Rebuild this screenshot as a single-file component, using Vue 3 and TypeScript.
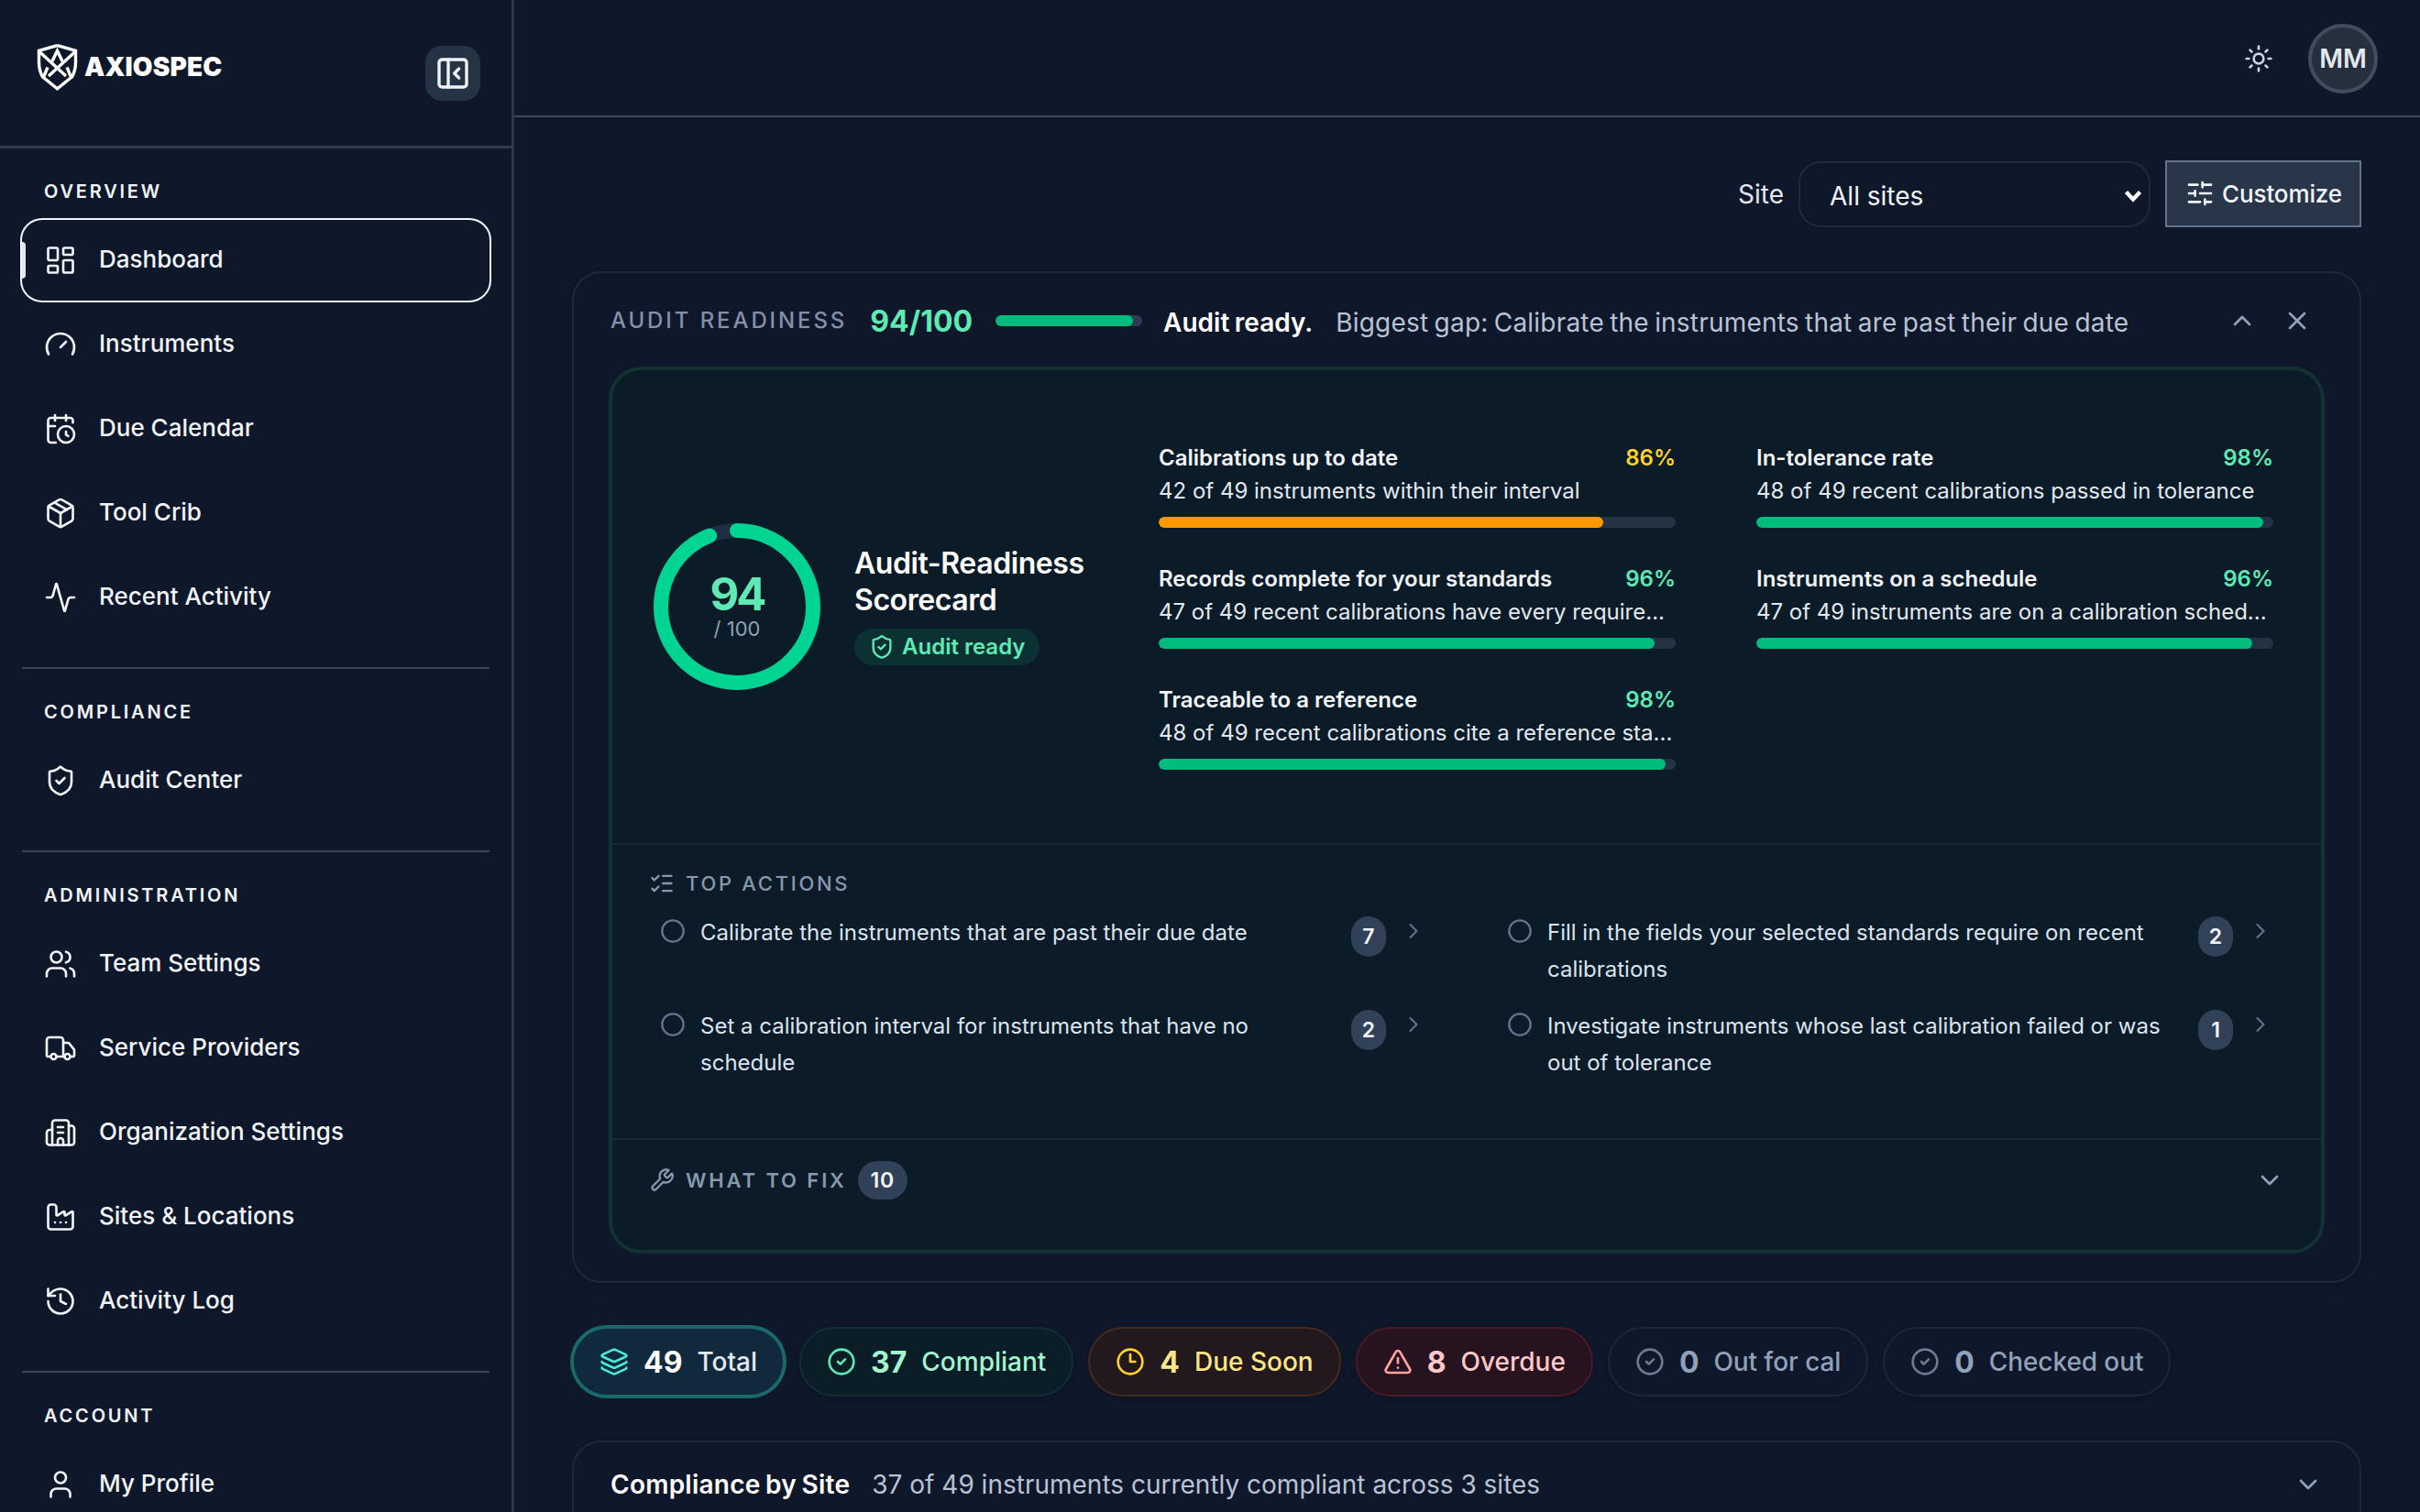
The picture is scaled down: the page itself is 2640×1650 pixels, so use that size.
<script setup lang="ts">
import { h } from 'vue'

const icons: Record<string, string> = {
  panel: '<rect width="18" height="18" x="3" y="3" rx="2"/><path d="M9 3v18"/><path d="m16 15-3-3 3-3"/>',
  dashboard: '<rect width="7" height="9" x="3" y="3" rx="1"/><rect width="7" height="5" x="14" y="3" rx="1"/><rect width="7" height="9" x="14" y="12" rx="1"/><rect width="7" height="5" x="3" y="16" rx="1"/>',
  gauge: '<path d="m12 14 4-4"/><path d="M3.34 19a10 10 0 1 1 17.32 0"/>',
  calendar: '<path d="M16 14v2.2l1.6 1"/><path d="M16 2v4"/><path d="M21 7.5V6a2 2 0 0 0-2-2H5a2 2 0 0 0-2 2v14a2 2 0 0 0 2 2h3.5"/><path d="M3 10h5"/><path d="M8 2v4"/><circle cx="16" cy="16" r="6"/>',
  box: '<path d="M11 21.73a2 2 0 0 0 2 0l7-4A2 2 0 0 0 21 16V8a2 2 0 0 0-1-1.73l-7-4a2 2 0 0 0-2 0l-7 4A2 2 0 0 0 3 8v8a2 2 0 0 0 1 1.73z"/><path d="M12 22V12"/><path d="M3.29 7 12 12l8.71-5"/><path d="m7.5 4.27 9 5.15"/>',
  activity: '<path d="M22 12h-2.48a2 2 0 0 0-1.93 1.46l-2.35 8.36a.25.25 0 0 1-.48 0L9.24 2.18a.25.25 0 0 0-.48 0l-2.35 8.36A2 2 0 0 1 4.49 12H2"/>',
  shield: '<path d="M20 13c0 5-3.5 7.5-7.66 8.95a1 1 0 0 1-.67-.01C7.5 20.5 4 18 4 13V6a1 1 0 0 1 1-1c2 0 4.5-1.2 6.24-2.72a1.17 1.17 0 0 1 1.52 0C14.51 3.81 17 5 19 5a1 1 0 0 1 1 1z"/><path d="m9 12 2 2 4-4"/>',
  users: '<path d="M16 21v-2a4 4 0 0 0-4-4H6a4 4 0 0 0-4 4v2"/><circle cx="9" cy="7" r="4"/><path d="M22 21v-2a4 4 0 0 0-3-3.87"/><path d="M16 3.13a4 4 0 0 1 0 7.75"/>',
  truck: '<path d="M14 18V6a2 2 0 0 0-2-2H4a2 2 0 0 0-2 2v11a1 1 0 0 0 1 1h2"/><path d="M15 18H9"/><path d="M19 18h2a1 1 0 0 0 1-1v-3.65a1 1 0 0 0-.22-.62l-3.48-4.35A1 1 0 0 0 17.52 8H14"/><circle cx="17" cy="18" r="2"/><circle cx="7" cy="18" r="2"/>',
  building: '<path d="M10 12h4"/><path d="M10 8h4"/><path d="M14 21v-3a2 2 0 0 0-4 0v3"/><path d="M6 10H4a2 2 0 0 0-2 2v7a2 2 0 0 0 2 2h16a2 2 0 0 0 2-2V9a2 2 0 0 0-2-2h-2"/><path d="M6 21V5a2 2 0 0 1 2-2h8a2 2 0 0 1 2 2v16"/>',
  factory: '<path d="M12 16h.01"/><path d="M16 16h.01"/><path d="M3 19a2 2 0 0 0 2 2h14a2 2 0 0 0 2-2V8.5a.5.5 0 0 0-.769-.422l-4.462 2.844A.5.5 0 0 1 15 10.5v-2a.5.5 0 0 0-.769-.422L9.77 10.922A.5.5 0 0 1 9 10.5V5a2 2 0 0 0-2-2H5a2 2 0 0 0-2 2z"/><path d="M8 16h.01"/>',
  history: '<path d="M3 12a9 9 0 1 0 9-9 9.75 9.75 0 0 0-6.74 2.74L3 8"/><path d="M3 3v5h5"/><path d="M12 7v5l4 2"/>',
  user: '<path d="M19 21v-2a4 4 0 0 0-4-4H9a4 4 0 0 0-4 4v2"/><circle cx="12" cy="7" r="4"/>',
  sun: '<circle cx="12" cy="12" r="4"/><path d="M12 2v2"/><path d="M12 20v2"/><path d="m4.93 4.93 1.41 1.41"/><path d="m17.66 17.66 1.41 1.41"/><path d="M2 12h2"/><path d="M20 12h2"/><path d="m6.34 17.66-1.41 1.41"/><path d="m19.07 4.93-1.41 1.41"/>',
  sliders: '<path d="M10 5H3"/><path d="M12 19H3"/><path d="M14 3v4"/><path d="M16 17v4"/><path d="M21 12h-9"/><path d="M21 19h-5"/><path d="M21 5h-7"/><path d="M8 10v4"/><path d="M8 12H3"/>',
  up: '<path d="m18 15-6-6-6 6"/>',
  down: '<path d="m6 9 6 6 6-6"/>',
  right: '<path d="m9 18 6-6-6-6"/>',
  x: '<path d="M18 6 6 18"/><path d="m6 6 12 12"/>',
  checks: '<path d="M13 5h8"/><path d="M13 12h8"/><path d="M13 19h8"/><path d="m3 17 2 2 4-4"/><path d="m3 7 2 2 4-4"/>',
  circle: '<circle cx="12" cy="12" r="10"/>',
  wrench: '<path d="M14.7 6.3a1 1 0 0 0 0 1.4l1.6 1.6a1 1 0 0 0 1.4 0l3.77-3.77a6 6 0 0 1-7.94 7.94l-6.91 6.91a2.12 2.12 0 0 1-3-3l6.91-6.91a6 6 0 0 1 7.94-7.94l-3.76 3.76z"/>',
  layers: '<path d="M12.83 2.18a2 2 0 0 0-1.66 0L2.6 6.08a1 1 0 0 0 0 1.83l8.58 3.91a2 2 0 0 0 1.66 0l8.58-3.9a1 1 0 0 0 0-1.83z"/><path d="M2 12a1 1 0 0 0 .58.91l8.6 3.91a2 2 0 0 0 1.65 0l8.58-3.9A1 1 0 0 0 22 12"/><path d="M2 17a1 1 0 0 0 .58.91l8.6 3.91a2 2 0 0 0 1.65 0l8.58-3.9A1 1 0 0 0 22 17"/>',
  check: '<circle cx="12" cy="12" r="10"/><path d="m9 12 2 2 4-4"/>',
  clock: '<circle cx="12" cy="12" r="10"/><path d="M12 6v6h4"/>',
  alert: '<path d="m21.73 18-8-14a2 2 0 0 0-3.48 0l-8 14A2 2 0 0 0 4 21h16a2 2 0 0 0 1.73-3"/><path d="M12 9v4"/><path d="M12 17h.01"/>',
}

const Icon = (props: { name: string }) =>
  h('svg', { class: 'icon', viewBox: '0 0 24 24', innerHTML: icons[props.name] })

const sections = [
  { title: 'Overview', items: [
    { icon: 'dashboard', label: 'Dashboard', active: true },
    { icon: 'gauge', label: 'Instruments' },
    { icon: 'calendar', label: 'Due Calendar' },
    { icon: 'box', label: 'Tool Crib' },
    { icon: 'activity', label: 'Recent Activity' },
  ] },
  { title: 'Compliance', items: [{ icon: 'shield', label: 'Audit Center' }] },
  { title: 'Administration', items: [
    { icon: 'users', label: 'Team Settings' },
    { icon: 'truck', label: 'Service Providers' },
    { icon: 'building', label: 'Organization Settings' },
    { icon: 'factory', label: 'Sites & Locations' },
    { icon: 'history', label: 'Activity Log' },
  ] },
  { title: 'Account', items: [{ icon: 'user', label: 'My Profile' }] },
] as { title: string; items: { icon: string; label: string; active?: boolean }[] }[]

const metrics = [
  { name: 'Calibrations up to date', pct: 86, note: '42 of 49 instruments within their interval' },
  { name: 'In-tolerance rate', pct: 98, note: '48 of 49 recent calibrations passed in tolerance' },
  { name: 'Records complete for your standards', pct: 96, note: '47 of 49 recent calibrations have every require...' },
  { name: 'Instruments on a schedule', pct: 96, note: '47 of 49 instruments are on a calibration sched...' },
  { name: 'Traceable to a reference', pct: 98, note: '48 of 49 recent calibrations cite a reference sta...' },
]

const actions = [
  { text: 'Calibrate the instruments that are past their due date', count: 7 },
  { text: 'Fill in the fields your selected standards require on recent calibrations', count: 2 },
  { text: 'Set a calibration interval for instruments that have no schedule', count: 2 },
  { text: 'Investigate instruments whose last calibration failed or was out of tolerance', count: 1 },
]

const pills = [
  { tone: 'total', icon: 'layers', count: 49, label: 'Total' },
  { tone: 'ok', icon: 'check', count: 37, label: 'Compliant' },
  { tone: 'due', icon: 'clock', count: 4, label: 'Due Soon' },
  { tone: 'over', icon: 'alert', count: 8, label: 'Overdue' },
  { tone: 'idle', icon: 'check', count: 0, label: 'Out for cal' },
  { tone: 'idle', icon: 'check', count: 0, label: 'Checked out' },
]

const circumference = 2 * Math.PI * 83
const ringDash = `${circumference * 0.94} ${circumference}`
</script>

<template>
  <div class="app">
    <aside class="sidebar">
      <div class="brand-row">
        <div class="brand">
          <svg class="logo" viewBox="0 0 44 51">
            <path d="M22 1.6 42 7.4V20c0 7-1.6 12-4.4 16.6M22 1.6 2 7.4V20c0 7 1.6 12 4.4 16.6" />
            <path d="M2.6 8.6 31.5 35M41.4 8.6 12.5 35" />
            <path d="M16.4 19 22 7.5 27.6 19" />
            <path d="M11.5 25.5 6.8 36.5 22 48.8 37.2 36.5 32.5 25.5" />
          </svg>
          <span class="brand-name">AXIOSPEC</span>
        </div>
        <button class="collapse"><Icon name="panel" /></button>
      </div>
      <nav>
        <section v-for="s in sections" :key="s.title" class="nav-section">
          <h6>{{ s.title }}</h6>
          <a v-for="i in s.items" :key="i.label" class="nav-item" :class="{ active: i.active }">
            <Icon :name="i.icon" /><span>{{ i.label }}</span>
          </a>
        </section>
      </nav>
    </aside>

    <div class="main">
      <header class="topbar">
        <Icon name="sun" class="sun" />
        <div class="avatar">MM</div>
      </header>

      <div class="content">
        <div class="toolbar">
          <span class="site">Site</span>
          <div class="select">
            <span>All sites</span>
            <svg viewBox="0 0 20 14"><path d="M2.5 2.5 10 10.5l7.5-8" /></svg>
          </div>
          <button class="customize"><Icon name="sliders" /><span>Customize</span></button>
        </div>

        <div class="card">
          <div class="card-head">
            <span class="eyebrow">Audit readiness</span>
            <span class="score">94/100</span>
            <span class="bar mini"><i :style="{ width: '94%' }"></i></span>
            <span class="ready">Audit ready.</span>
            <span class="gap-note">Biggest gap: Calibrate the instruments that are past their due date</span>
            <span class="head-icons"><Icon name="up" /><Icon name="x" /></span>
          </div>

          <div class="score-card">
            <div class="summary">
              <div class="ring">
                <svg viewBox="0 0 192 192">
                  <circle class="track" cx="96" cy="96" r="83" />
                  <circle class="value" cx="96" cy="96" r="83" :stroke-dasharray="ringDash" transform="rotate(-90 96 96)" />
                </svg>
                <div class="ring-text"><b>94</b><span>/ 100</span></div>
              </div>
              <div class="score-title">
                <h2>Audit-Readiness<br />Scorecard</h2>
                <span class="ready-badge"><Icon name="shield" /><span>Audit ready</span></span>
              </div>
              <div class="metrics">
                <div v-for="m in metrics" :key="m.name" class="metric">
                  <div class="metric-top"><span>{{ m.name }}</span><b :class="{ warn: m.pct < 90 }">{{ m.pct }}%</b></div>
                  <p>{{ m.note }}</p>
                  <span class="bar" :class="{ warn: m.pct < 90 }"><i :style="{ width: m.pct + '%' }"></i></span>
                </div>
              </div>
            </div>

            <div class="actions">
              <div class="sub-head"><Icon name="checks" /><span class="top-title">Top actions</span></div>
              <div class="action-grid">
                <div v-for="a in actions" :key="a.text" class="action">
                  <Icon name="circle" class="todo" />
                  <p>{{ a.text }}</p>
                  <span class="count">{{ a.count }}</span>
                  <Icon name="right" class="go" />
                </div>
              </div>
            </div>

            <div class="fix">
              <div class="sub-head"><Icon name="wrench" /><span class="fix-title">What to fix</span><span class="count">10</span></div>
              <Icon name="down" class="chev" />
            </div>
          </div>
        </div>

        <div class="pills">
          <div v-for="p in pills" :key="p.label" class="pill" :class="p.tone">
            <Icon :name="p.icon" /><b>{{ p.count }}</b><span>{{ p.label }}</span>
          </div>
        </div>

        <div class="card site-card">
          <b>Compliance by Site</b>
          <span>37 of 49 instruments currently compliant across 3 sites</span>
          <Icon name="down" class="chev" />
        </div>
      </div>
    </div>
  </div>
</template>

<style>
body { margin: 0; background: #0f172a; }
</style>

<style scoped>
* { box-sizing: border-box; }
.app { display: flex; width: 2640px; height: 1650px; overflow: hidden; background: #0f172a; color: #f1f5f9; font-family: Inter, "Liberation Sans", sans-serif; font-size: 24px; }
h2, h6, p { margin: 0; }
button { border: 0; font: inherit; color: inherit; padding: 0; }
.icon { width: 32px; height: 32px; flex: none; display: block; fill: none; stroke: currentColor; stroke-width: 2; stroke-linecap: round; stroke-linejoin: round; }

.sidebar { width: 561px; flex: none; border-right: 3px solid #2c374a; }
.brand-row { display: flex; justify-content: space-between; align-items: flex-start; height: 162px; padding: 48px 34px 0 40px; border-bottom: 3px solid #303b4e; }
.brand { display: flex; align-items: center; gap: 7px; }
.logo { width: 45px; height: 51px; fill: none; stroke: #fff; stroke-width: 3.4; }
.brand-name { font-size: 28px; font-weight: 900; letter-spacing: 0.15px; color: #fff; line-height: 32px; padding-bottom: 2px; }
.collapse { display: grid; place-items: center; width: 60px; height: 60px; margin-top: 2px; border-radius: 18px; background: #253347; }
.collapse .icon { width: 40px; height: 40px; }
.nav-section { width: 510px; margin: 0 0 32px 24px; padding-top: 32px; display: flex; flex-direction: column; gap: 4px; }
.nav-section + .nav-section { border-top: 2px solid #3a4558; }
h6 { font-size: 20px; line-height: 30px; font-weight: 600; letter-spacing: 2.8px; text-transform: uppercase; padding-left: 24px; margin-bottom: 12px; }
.nav-item { position: relative; display: flex; align-items: center; gap: 24px; height: 88px; padding-left: 24px; border-radius: 22px; font-size: 26px; font-weight: 500; }
.nav-item span { padding-bottom: 3px; }
.nav-item .icon { width: 36px; height: 36px; stroke-width: 1.75; }
.nav-item.active { box-shadow: 0 0 0 2px #f1f5f9; }
.nav-item.active::before { content: ""; position: absolute; left: 0; top: 24px; width: 4px; height: 40px; background: #e2e8f0; border-radius: 0 4px 4px 0; }

.main { flex: 1; min-width: 0; }
.topbar { display: flex; justify-content: flex-end; align-items: center; gap: 38px; height: 128px; padding: 2px 46px 0 0; border-bottom: 2px solid #3d485a; }
.sun { color: #cad5e2; }
.avatar { display: grid; place-items: center; width: 76px; height: 76px; border-radius: 50%; border: 4px solid #414c5c; background: #252f3e; font-size: 28px; font-weight: 600; color: #e2e8f0; }
.content { padding: 48px 64px 0 63px; }
.toolbar { display: flex; align-items: center; justify-content: flex-end; height: 72px; }
.site { font-size: 28px; color: #e2e8f0; margin-right: 16px; }
.select { display: flex; align-items: center; justify-content: space-between; width: 384px; height: 72px; border: 2px solid #1f2a3c; border-radius: 24px; padding: 4px 7px 0 32px; font-size: 28px; margin-right: 16px; }
.select svg { width: 20px; height: 14px; fill: none; stroke: #fff; stroke-width: 4.4; }
.customize { display: flex; align-items: center; gap: 8px; height: 73px; margin-top: -1px; padding: 0 19px 1px 20px; border: 2px solid #64748b; background: #293548; font-size: 26px; font-weight: 500; letter-spacing: -0.12px; }

.card { border: 2px solid #1d283a; border-radius: 32px; margin-top: 48px; padding: 0 38px 30px; box-shadow: 0 4px 8px rgba(0, 0, 0, 0.12); }
.card-head { display: flex; align-items: center; height: 102px; padding-top: 2px; }
.eyebrow { color: #8290a8; font-weight: 500; letter-spacing: 2.9px; text-transform: uppercase; margin: -2px 25px 0 2px; }
.score { font-size: 32px; font-weight: 700; color: #5ee9b5; margin-right: 25px; }
.bar { display: block; height: 12px; border-radius: 6px; background: #243244; overflow: hidden; }
.bar i { display: block; height: 100%; border-radius: 6px; background: #00bc7d; }
.bar.warn i { background: #fe9a00; }
.mini { width: 160px; background: #2f3b52; margin-right: 23px; }
.ready { font-size: 28px; font-weight: 600; color: #fff; letter-spacing: 0; word-spacing: -1.5px; margin: 4px 25px 0 0; }
.gap-note { font-size: 28px; color: #b8c3d4; margin-top: 4px; white-space: nowrap; letter-spacing: 0.2px; word-spacing: -1.8px; }
.head-icons { display: flex; gap: 28px; margin-left: auto; padding-right: 14px; color: #90a1b9; }

.score-card { height: 968px; border: 4px solid #123332; border-radius: 36px; background: #0c1b28; }
.summary { display: flex; align-items: center; height: 516px; padding: 0 52px 0 40px; }
.ring { position: relative; width: 192px; height: 192px; }
.ring svg { display: block; width: 192px; height: 192px; fill: none; stroke-width: 16; }
.ring .track { stroke: #1f2d42; }
.ring .value { stroke: #00d492; stroke-linecap: round; }
.ring-text { position: absolute; inset: 0; display: flex; flex-direction: column; align-items: center; padding-top: 59px; }
.ring-text b { font-size: 49px; line-height: 48px; color: #5ee9b5; letter-spacing: -3px; }
.ring-text span { font-size: 22px; line-height: 26px; color: #90a1b9; }
.score-title { width: 332px; margin: 0 0 3px 32px; display: flex; flex-direction: column; align-items: flex-start; gap: 11px; }
h2 { font-size: 32px; line-height: 40px; font-weight: 600; color: #fff; letter-spacing: -0.42px; }
.ready-badge { display: flex; align-items: center; gap: 8px; height: 40px; padding: 0 16px 1px; border-radius: 20px; background: #0c3133; color: #5ee9b5; font-weight: 600; }
.ready-badge .icon { width: 28px; height: 28px; }
.metrics { flex: 1; display: grid; grid-template-columns: 564px 564px; gap: 40px 88px; }
.metric { height: 92px; }
.metric-top { display: flex; justify-content: space-between; line-height: 32px; font-weight: 600; }
.metric-top b { font-weight: 600; color: #5ee9b5; }
.metric-top b.warn { color: #ffd230; }
.metric p { line-height: 36px; padding-top: 2px; margin-bottom: 10px; white-space: nowrap; color: #e2e8f0; }

.actions { height: 322px; border-top: 2px solid #172937; padding: 22px 40px 0; }
.sub-head { display: flex; align-items: center; gap: 12px; height: 40px; color: #8898ad; font-size: 22px; font-weight: 600; text-transform: uppercase; letter-spacing: 2.88px; }
.sub-head .icon { width: 28px; height: 28px; }
.top-title { font-weight: 500; letter-spacing: 2.7px; }
.action-grid { display: grid; grid-template-columns: 1fr 1fr; gap: 22px 64px; padding-top: 14px; }
.action { display: flex; align-items: flex-start; height: 80px; padding: 0 12px; gap: 16px; }
.action .icon { width: 28px; height: 28px; margin-top: 4px; color: #62748e; }
.action .go { stroke-width: 1.75; }
.action p { flex: 1; line-height: 40px; color: #dbe4ee; }
.count { display: grid; place-items: center; min-width: 38px; height: 44px; padding: 0 12px; border-radius: 22px; background: #314158; color: #f1f5f9; font-size: 23px; font-weight: 600; letter-spacing: 0; }
.action .count { margin-top: 2px; }
.fix { display: flex; justify-content: space-between; align-items: flex-start; height: 118px; border-top: 2px solid #172937; padding: 24px 40px 0; }
.fix .count { width: 54px; height: 42px; letter-spacing: 1px; }
.chev { color: #90a1b9; }
.fix .chev { margin-top: 4px; }

.pills { display: flex; gap: 16px; margin-top: 48px; }
.pill { display: flex; align-items: center; height: 76px; padding: 0 28px; border: 2px solid; border-radius: 38px; font-size: 28px; font-weight: 500; box-shadow: 0 2px 6px rgba(0, 0, 0, 0.15); }
.pill b { font-size: 32px; margin: 0 16px; font-weight: 700; }
.pill.total { background: #11293c; border-color: #1a6a6a; box-shadow: 0 0 0 2px #1a6a6a; color: #e2e8f0; }
.total .icon { color: #46ecd5; }
.total b { color: #fff; }
.pill.ok { background: #0b1d26; border-color: #0f2f34; color: #a4f4cf; }
.ok .icon { color: #5ee9b5; }
.pill.due { background: #21191e; border-color: #46291c; color: #fee685; }
.due .icon { color: #ffd230; }
.pill.over { background: #27121f; border-color: #4d1924; color: #ffc9c9; }
.over .icon { color: #ffa2a2; }
.pill.idle { border-color: #1c273a; color: #90a1b9; letter-spacing: -0.08px; }
.idle .icon { color: #6c7b92; }

.site-card { display: flex; align-items: center; height: 140px; padding: 0 40px 44px; font-size: 28px; }
.site-card b { font-weight: 600; color: #fff; letter-spacing: 0.25px; word-spacing: -1.8px; }
.site-card span { color: #b8c3d4; margin-left: 24px; }
.site-card .chev { margin-left: auto; }
</style>
